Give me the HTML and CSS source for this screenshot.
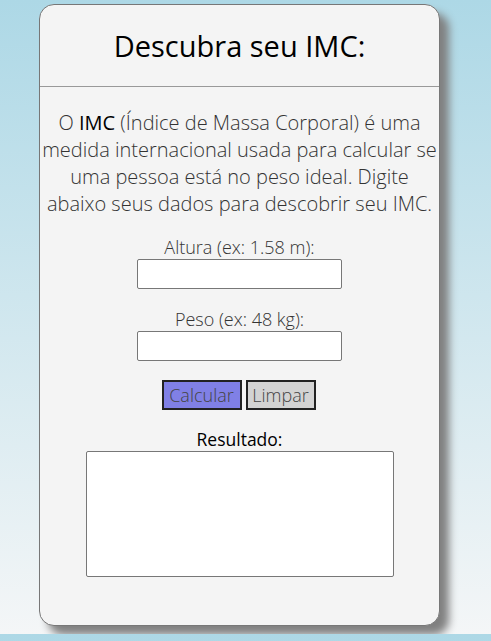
FILE: index.html
```html
<!DOCTYPE html>
<html lang="pt-BR">
<head>
<meta charset="utf-8">
<title>Descubra seu IMC</title>
<link rel="stylesheet" href="styles.css">
</head>
<body>
<main class="card">
  <header class="card-header">
    <h1 class="title">Descubra seu IMC:</h1>
  </header>
  <p class="intro">O <strong>IMC</strong> (Índice de Massa Corporal) é uma medida internacional usada para calcular se uma pessoa está no peso ideal. Digite abaixo seus dados para descobrir seu IMC.</p>
  <form class="form">
    <div class="field">
      <label class="label" for="altura">Altura (ex: 1.58 m):</label>
      <input class="input" type="text" id="altura">
    </div>
    <div class="field">
      <label class="label" for="peso">Peso (ex: 48 kg):</label>
      <input class="input" type="text" id="peso">
    </div>
    <div class="buttons">
      <button type="button" class="btn btn-calc">Calcular</button>
      <button type="reset" class="btn btn-clear">Limpar</button>
    </div>
    <div class="result">
      <label class="result-label" for="resultado">Resultado:</label>
      <textarea class="result-box" id="resultado"></textarea>
    </div>
  </form>
</main>
</body>
</html>
```
FILE: styles.css
```css
body {
  margin: 0;
  padding: 4px 0 8px 39px;
  background: linear-gradient(#add8e6, #f4f6f7);
  font-family: "Open Sans", "DejaVu Sans", sans-serif;
}

.card {
  width: 399px;
  box-sizing: content-box;
  background: #f4f4f4;
  border: 1px solid #777;
  border-radius: 15px;
  box-shadow: 9px 9px 8px #808080;
  padding-bottom: 48px;
}

.card-header {
  border-bottom: 1px solid #999;
  padding: 22px 0 21px;
}

.title {
  margin: 0;
  font-size: 29px;
  font-weight: 400;
  line-height: 38px;
  text-align: center;
  color: #000;
}

.intro {
  margin: 22px 2px 0;
  font-size: 20px;
  font-weight: 300;
  line-height: 27px;
  text-align: center;
  color: #333;
}

.intro strong {
  font-weight: 400;
  color: #000;
}

.form {
  display: flex;
  flex-direction: column;
  align-items: center;
}

.field {
  display: flex;
  flex-direction: column;
  align-items: center;
  margin-top: 18px;
}

.label {
  font-size: 18px;
  font-weight: 300;
  line-height: 24px;
  color: #333;
}

.input {
  box-sizing: border-box;
  width: 205px;
  height: 30px;
  margin: 0;
  border: 1px solid #777;
  border-radius: 2px;
  background: #fff;
}

.buttons {
  display: flex;
  gap: 4px;
  margin: 19px 2px 0 0;
}

.btn {
  box-sizing: border-box;
  height: 30px;
  padding: 0 4px;
  border: 2px solid #222;
  font-family: "Open Sans", "DejaVu Sans", sans-serif;
  font-size: 18px;
  font-weight: 300;
  color: #444;
}

.btn-calc {
  width: 80px;
  background: #8080e6;
}

.btn-clear {
  width: 70px;
  background: #d3d3d3;
}

.result {
  display: flex;
  flex-direction: column;
  align-items: center;
  margin-top: 17px;
}

.result-label {
  font-size: 17.5px;
  font-weight: 400;
  line-height: 24px;
  color: #000;
}

.result-box {
  box-sizing: border-box;
  width: 308px;
  height: 126px;
  margin: 0;
  border: 1px solid #777;
  border-radius: 2px;
  background: #fff;
  resize: none;
}
```
